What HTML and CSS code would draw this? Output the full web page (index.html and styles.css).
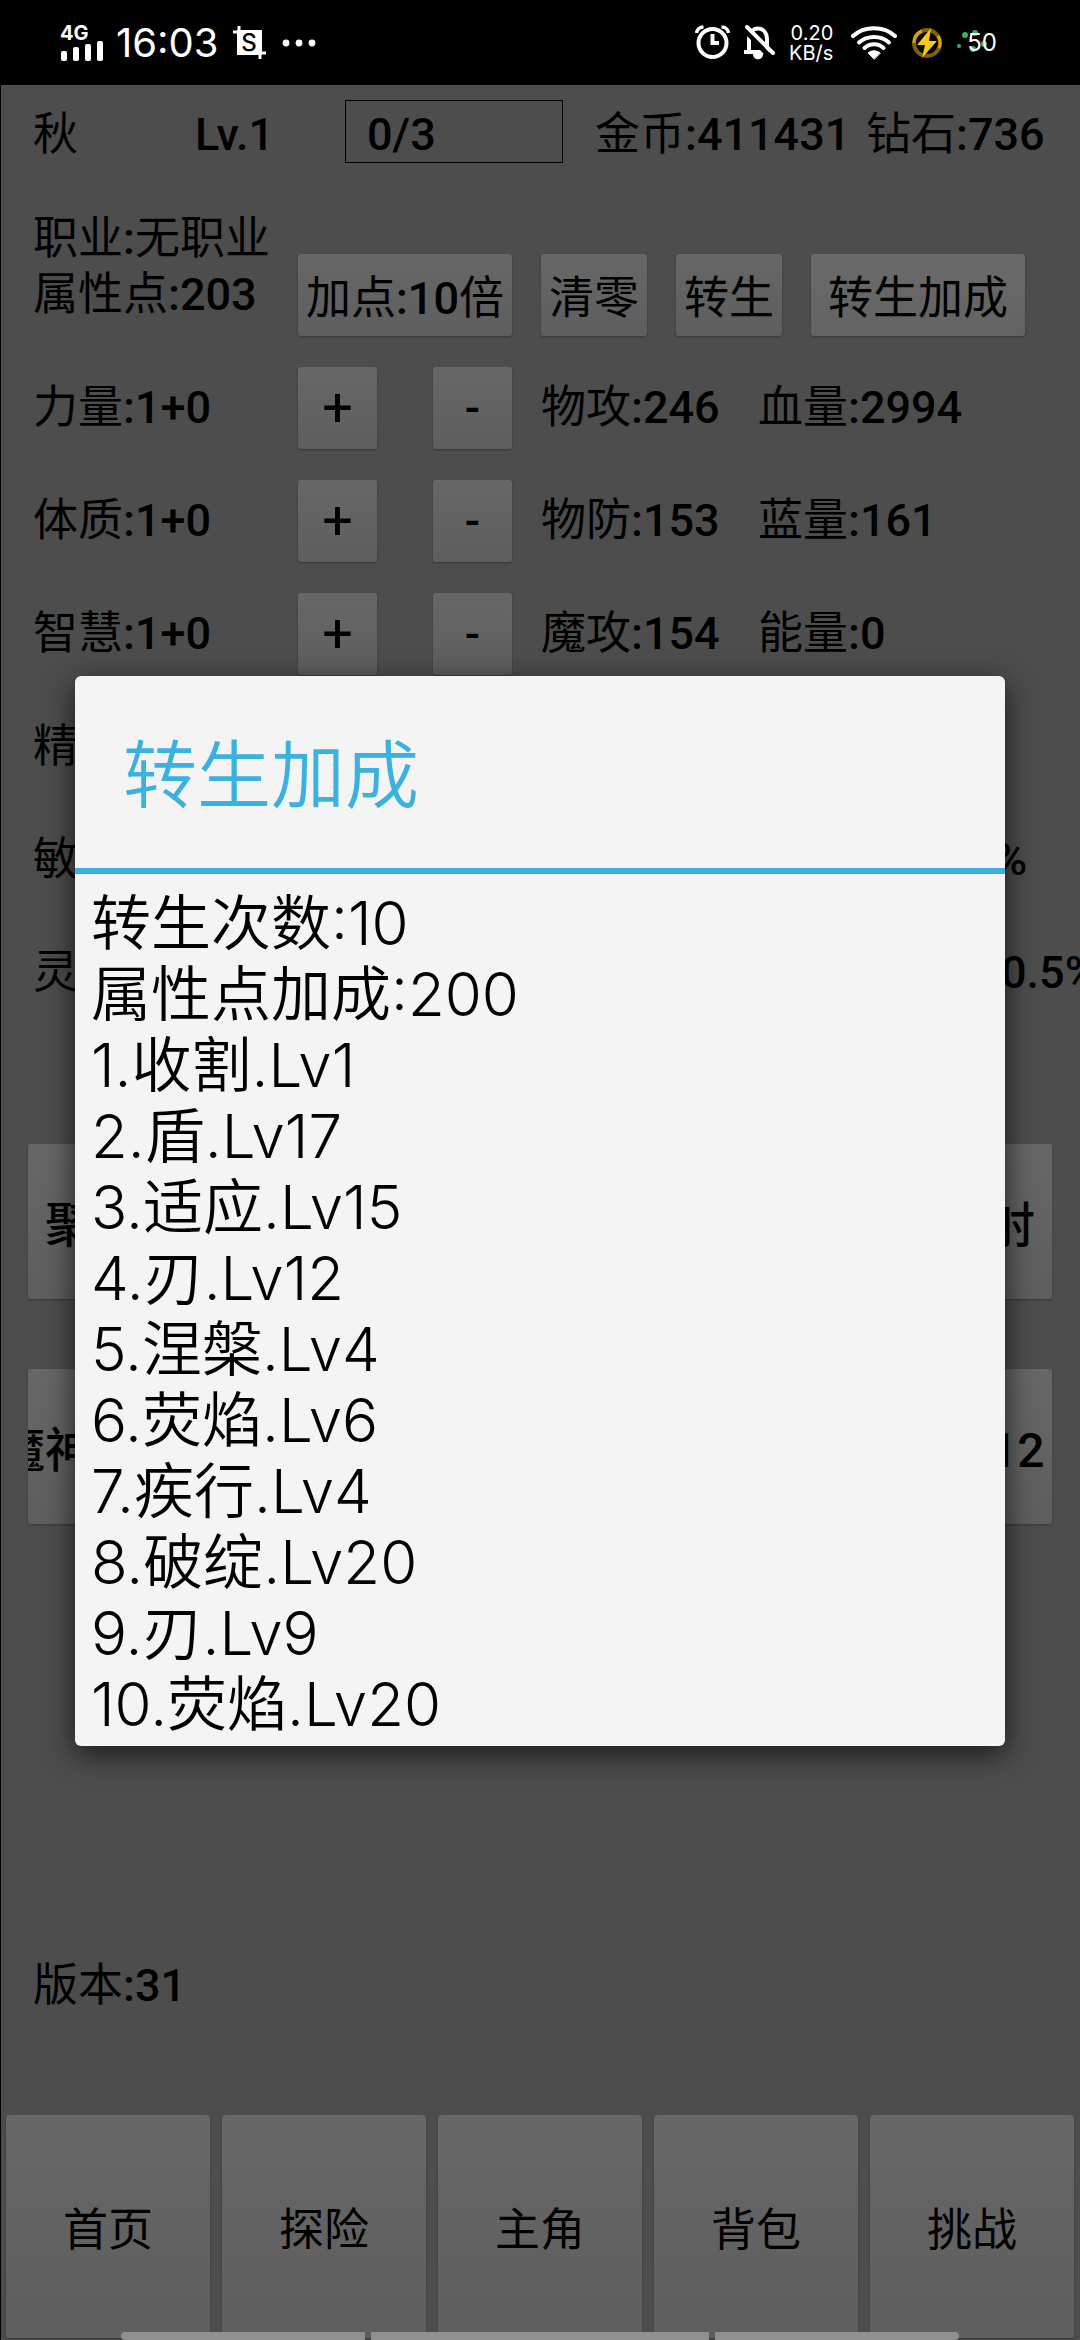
FILE: index.html
```html
<!doctype html>
<html lang="zh-CN">
<head>
    <meta charset="utf-8">
    <meta name="viewport" content="width=device-width, initial-scale=1">
    <title>转生加成</title>
    <link rel="stylesheet" href="styles.css">
</head>
<body>

<header class="statusbar">
    <div class="network">
        <span class="network-type">4G</span>
        <svg class="signal" width="43" height="20" viewBox="0 0 43 20" fill="#fff">
            <rect x="1" y="10" width="6" height="10" rx="2"/>
            <rect x="13" y="6" width="6" height="14" rx="2"/>
            <rect x="25" y="3" width="6" height="17" rx="2"/>
            <rect x="37" y="0" width="6" height="20" rx="2"/>
        </svg>
    </div>
    <span class="clock">16:03</span>
    <svg class="shot" width="33" height="34" viewBox="0 0 33 34" fill="none">
        <path d="M4 4H29V29H4Z" fill="#fff"/>
        <path d="M0 6H8M6 0V8M25 27H33M27 25V33" stroke="#fff" stroke-width="3"/>
        <text x="16" y="25" class="shot-letter">S</text>
    </svg>
    <svg class="more" width="34" height="8" viewBox="0 0 34 8" fill="#fff">
        <circle cx="4" cy="4" r="3.400"/>
        <circle cx="17" cy="4" r="3.400"/>
        <circle cx="30" cy="4" r="3.400"/>
    </svg>

    <div class="status-right">
        <svg width="35" height="35" viewBox="0 0 35 35" fill="none" stroke="#fff">
            <circle cx="17.500" cy="18" r="14" stroke-width="4"/>
            <path d="M17.500 9V18H24" stroke-width="4"/>
            <path d="M1.500 8C2 4.500 5 2 8.500 2M33.500 8C33 4.500 30 2 26.500 2" stroke-width="3.500"/>
        </svg>
        <svg width="31" height="35" viewBox="0 0 31 35" fill="none" stroke="#fff">
            <path d="M5 27V15C5 8 8.500 3.500 14 3.500S23 8 23 15V27" stroke-width="4"/>
            <path d="M0 27H25" stroke-width="4"/>
            <path d="M9 29C9 36 19 36 19 29Z" fill="#fff" stroke="none"/>
            <path d="M1 5L26 32" stroke="#000" stroke-width="5"/>
            <path d="M3 2L29 28" stroke-width="4" stroke-linecap="round"/>
        </svg>
        <div class="speed"><span>0.20</span><span>KB/s</span></div>
        <svg width="46" height="34" viewBox="0 0 46 34" fill="none" stroke="#fff" stroke-width="4" stroke-linecap="round">
            <path d="M2 10C13-.5 33-.5 44 10"/>
            <path d="M8 16.500C16 9 30 9 38 16.500"/>
            <path d="M13.500 22C19 17 27 17 32.500 22"/>
            <path d="M23 33L17 27C20 24 26 24 29 27Z" fill="#fff" stroke-width="1"/>
        </svg>
        <svg width="32" height="32" viewBox="0 0 32 32" fill="none">
            <circle cx="16" cy="16" r="13" stroke="#7c6400" stroke-width="4"/>
            <path d="M3 16A13 13 0 0 1 11 4M27 9A13 13 0 0 1 28 21" stroke="#d6a50d" stroke-width="3"/>
            <path d="M20 1L6 18H14L11 31L26 14H18Z" fill="#ffc61a"/>
        </svg>
        <div class="battery">
            <svg class="sparks" width="40" height="24" viewBox="0 0 40 24" fill="#3fae5c">
                <circle cx="8" cy="6" r="3"/>
                <circle cx="2" cy="17" r="2"/>
                <circle cx="18" cy="4" r="3"/>
                <circle cx="16" cy="20" r="3"/>
                <circle cx="27" cy="15" r="3"/>
            </svg>
            <span>50</span>
        </div>
    </div>
</header>

<main class="page">
    <section class="player">
        <span>秋</span>
        <span><b>Lv.1</b></span>
        <input class="exp" type="text" value="0/3" aria-label="经验" readonly>
        <span>金币<b>:411431</b></span>
        <span>钻石<b>:736</b></span>
    </section>

    <section class="points">
        <div class="job">职业<b>:</b>无职业<br>属性点<b>:203</b></div>
        <button class="btn">加点<b>:10</b>倍</button>
        <button class="btn">清零</button>
        <button class="btn">转生</button>
        <button class="btn active">转生加成</button>
    </section>

    <section class="stats">
        <div class="stat"><span>力量<b>:1+0</b></span><button class="btn step">+</button><button class="btn"><b>-</b></button><span>物攻<b>:246</b></span><span>血量<b>:2994</b></span></div>
        <div class="stat"><span>体质<b>:1+0</b></span><button class="btn step">+</button><button class="btn"><b>-</b></button><span>物防<b>:153</b></span><span>蓝量<b>:161</b></span></div>
        <div class="stat"><span>智慧<b>:1+0</b></span><button class="btn step">+</button><button class="btn"><b>-</b></button><span>魔攻<b>:154</b></span><span>能量<b>:0</b></span></div>
        <div class="stat"><span>精神<b>:1+0</b></span><button class="btn step">+</button><button class="btn"><b>-</b></button><span>魔防<b>:152</b></span><span>速度<b>:10</b></span></div>
        <div class="stat"><span>敏捷<b>:1+0</b></span><button class="btn step">+</button><button class="btn"><b>-</b></button><span>命中<b>:101</b></span><span>暴击率<b>:10.5%</b></span></div>
        <div class="stat"><span>灵巧<b>:1+0</b></span><button class="btn step">+</button><button class="btn"><b>-</b></button><span>闪避<b>:101</b></span><span>暴击伤害<b>:150.5%</b></span></div>
    </section>

    <section class="skills">
        <button class="btn">聚气</button>
        <button class="btn">重击</button>
        <button class="btn">治疗</button>
        <button class="btn">火球</button>
        <button class="btn">反射</button>
        <button class="btn">魔神降临</button>
        <button class="btn">收割</button>
        <button class="btn">适应</button>
        <button class="btn">破绽</button>
        <button class="btn">盾:12</button>
    </section>

    <p class="version">版本<b>:31</b></p>

    <nav class="tabs">
        <button class="btn">首页</button>
        <button class="btn">探险</button>
        <button class="btn">主角</button>
        <button class="btn">背包</button>
        <button class="btn">挑战</button>
    </nav>
</main>

<div class="overlay">
    <div class="dialog" role="dialog" aria-labelledby="dialogTitle">
        <h2 id="dialogTitle">转生加成</h2>
        <div class="dialog-body">
            <div>转生次数:10</div>
            <div>属性点加成:200</div>
            <div>1.收割.Lv1</div>
            <div>2.盾.Lv17</div>
            <div>3.适应.Lv15</div>
            <div>4.刃.Lv12</div>
            <div>5.涅槃.Lv4</div>
            <div>6.荧焰.Lv6</div>
            <div>7.疾行.Lv4</div>
            <div>8.破绽.Lv20</div>
            <div>9.刃.Lv9</div>
            <div>10.荧焰.Lv20</div>
        </div>
    </div>
</div>

<!-- system gesture bar -->
<div class="gesture"><i></i><i></i><i></i></div>

</body>
</html>
```
FILE: styles.css
```css
* {
    box-sizing: border-box;
}

body {
    margin: 0;
    min-height: 100vh;
    display: flex;
    flex-direction: column;
    position: relative;
    overflow: hidden;
    background-color: #4d4d4d;
    color: #000;
    font-family: Roboto, "Noto Sans CJK SC", sans-serif;
    font-size: 45px;
    font-weight: 400;
    line-height: 56px;
    white-space: nowrap;
}

b {
    font-weight: 500;
}

/* Status bar */
.statusbar {
    height: 85px;
    padding: 0 83px 0 60px;
    display: flex;
    align-items: center;
    background: #000;
    color: #fff;
    font-family: Inter, sans-serif;
}

.network {
    display: flex;
    flex-direction: column;
    margin-right: 13px;
}

.network-type {
    font-size: 20px;
    font-weight: 700;
    line-height: 16px;
}

.clock {
    font-size: 40px;
    margin-right: 14px;
}

.shot {
    margin-right: 16px;
}

.shot-letter {
    fill: #000;
    font-size: 24px;
    font-weight: 500;
    text-anchor: middle;
}

.status-right {
    margin-left: auto;
    display: flex;
    align-items: center;
    gap: 14px;
}

.speed {
    display: flex;
    flex-direction: column;
    align-items: flex-end;
    margin-right: 4px;
    font-size: 20px;
    line-height: 20px;
}

.battery {
    position: relative;
    padding-left: 10px;
    font-size: 24px;
    line-height: 28px;
}

.battery span {
    position: relative;
}

.sparks {
    position: absolute;
    left: 0;
    top: 0;
}

/* Game page */
.page {
    flex: 1;
    display: flex;
    flex-direction: column;
    border-left: 1px solid #000;
}

.btn {
    display: flex;
    justify-content: center;
    align-items: center;
    height: 82px;
    padding: 8px 0 0;
    overflow: hidden;
    border: none;
    border-radius: 3px;
    background: linear-gradient(#676767, #5e5e5e);
    box-shadow: 0 1px 2px rgba(0, 0, 0, 0.3);
    color: #000;
    font: inherit;
    white-space: nowrap;
}

.active {
    background: linear-gradient(#6a6a6a, #636363);
}

.player {
    display: grid;
    grid-template-columns: 1fr 150px 250px 271px 178px;
    align-items: center;
    padding: 15px 36px 0 32px;
}

.player span {
    padding-top: 7px;
}

.exp {
    width: 218px;
    height: 63px;
    padding: 6px 21px 0;
    border: 1px solid #000;
    background: transparent;
    color: #000;
    font: inherit;
    font-weight: 500;
}

.points {
    display: grid;
    grid-template-columns: 1fr 214px 106px 106px 214px;
    column-gap: 29px;
    align-items: end;
    padding: 48px 55px 0 32px;
}

.job {
    width: 236px;
    height: 125px;
}

.stats {
    display: flex;
    flex-direction: column;
    gap: 31px;
    padding: 31px 55px 0 32px;
}

.stat {
    display: grid;
    grid-template-columns: 1fr 135px 108px 217px 267px;
    align-items: center;
}

.stat .btn {
    width: 79px;
    padding: 0;
}

.stat .step {
    font-size: 54px;
}

.skills {
    display: grid;
    grid-template-columns: repeat(5, 130px);
    justify-content: space-between;
    row-gap: 70px;
    padding: 130px 28px 0 27px;
}

.skills .btn {
    height: 155px;
    font-size: 48px;
    font-weight: 500;
}

.version {
    margin: auto 0 101px;
    padding-left: 32px;
}

.tabs {
    display: grid;
    grid-template-columns: repeat(5, 1fr);
    gap: 12px;
    padding: 0 6px 2px 5px;
}

.tabs .btn {
    height: 223px;
}

/* Dialog */
.overlay {
    position: absolute;
    inset: 85px 0 3px;
    display: flex;
    align-items: center;
    padding: 0 75px;
}

.dialog {
    flex: 1;
    border-radius: 6px;
    background: #f4f4f4;
    box-shadow: 0 8px 30px rgba(0, 0, 0, 0.7);
    font-family: Inter, "Noto Sans CJK SC", sans-serif;
    font-weight: 350;
}

.dialog h2 {
    margin: 0;
    padding: 53px 48px 47px;
    border-bottom: 6px solid #3ab1df;
    color: #3ab1df;
    font-size: 74px;
    font-weight: 350;
    line-height: 92px;
}

.dialog-body {
    padding: 14px 16px 6px;
    font-size: 60px;
    line-height: 71px;
}

.gesture {
    position: absolute;
    left: 0;
    right: 0;
    bottom: 0;
    display: flex;
    gap: 6px;
    padding: 0 121px;
}

.gesture i {
    flex: 245;
    height: 8px;
    background: #8f8f8f;
}

.gesture i:nth-child(2) {
    flex: 338;
}

.gesture i:first-child {
    border-top-left-radius: 6px;
    border-bottom-left-radius: 6px;
}

.gesture i:last-child {
    border-top-right-radius: 6px;
    border-bottom-right-radius: 6px;
}
```
